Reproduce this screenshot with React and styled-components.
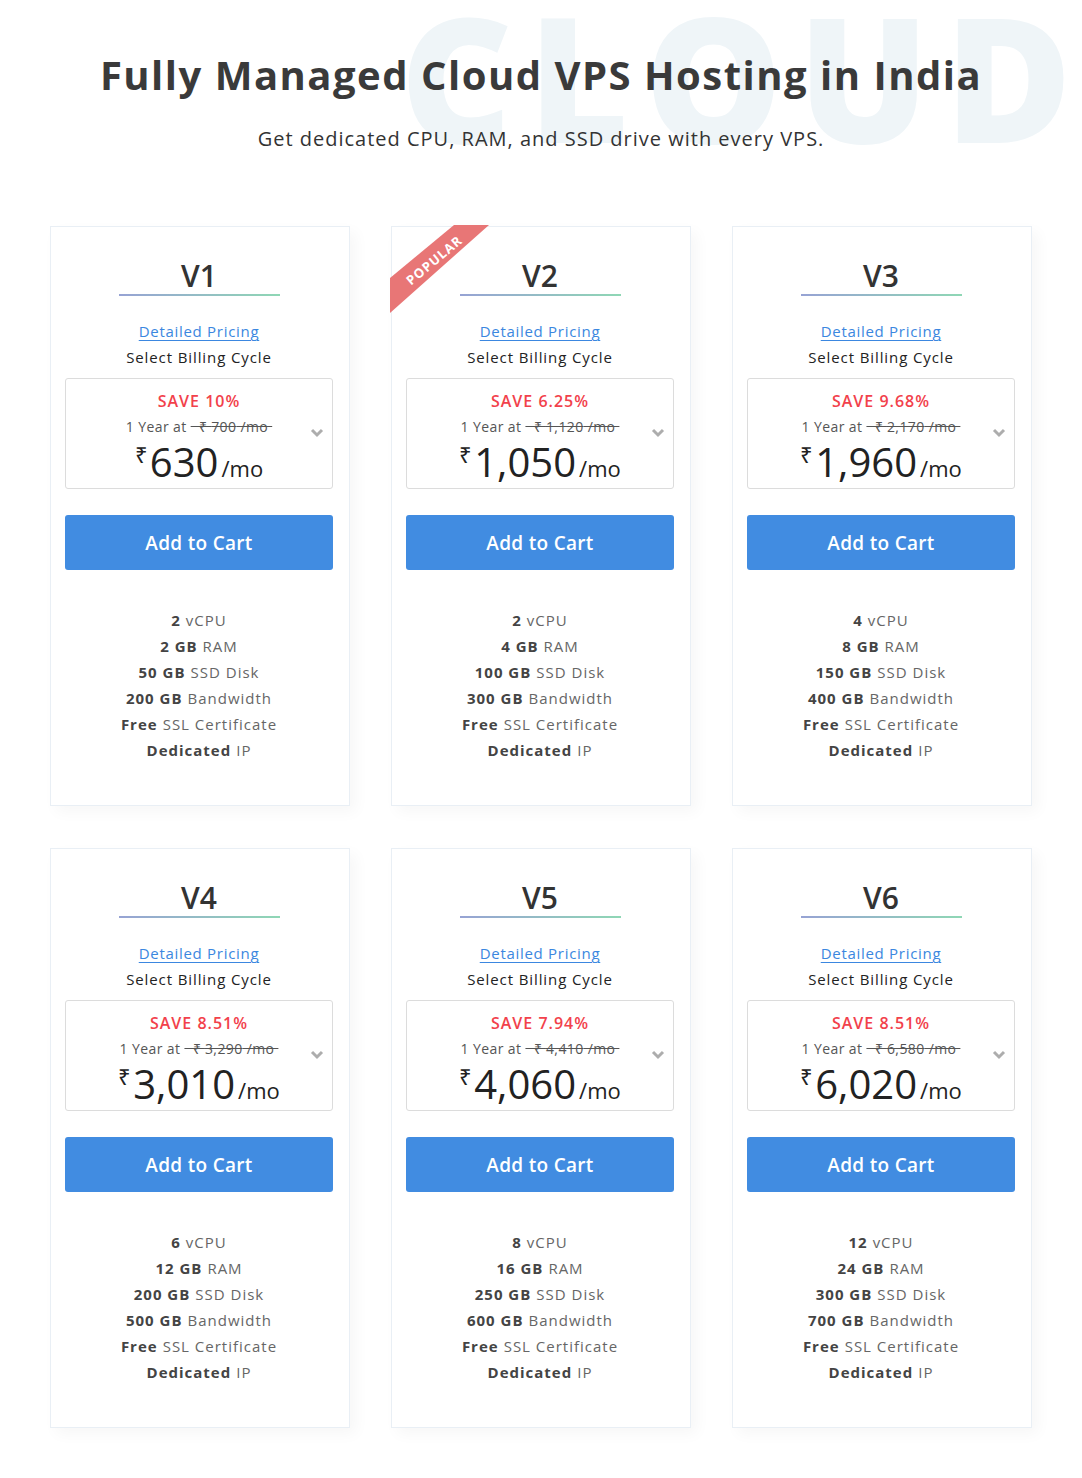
import React from 'react';
import styled, { createGlobalStyle } from 'styled-components';

const GlobalStyle = createGlobalStyle`
  body {
    margin: 0;
    background: #fff;
    font-family: 'Open Sans', 'Liberation Sans', sans-serif;
    color: #333;
  }
`;

const Page = styled.div`
  width: 1082px;
  overflow: hidden;
  padding-bottom: 50px;
`;

const Header = styled.header`
  position: relative;
  text-align: center;
  padding-top: 50px;
`;

const Watermark = styled.div`
  position: absolute;
  left: 400px;
  top: -11px;
  font-size: 174px;
  font-weight: 800;
  letter-spacing: 15px;
  color: #eff5f8;
  line-height: 1;
  white-space: nowrap;
  pointer-events: none;
`;

const Title = styled.h1`
  position: relative;
  margin: 0;
  font-size: 40px;
  line-height: 50px;
  font-weight: 700;
  letter-spacing: 1.5px;
  color: #3a3a3a;
`;

const Subtitle = styled.p`
  position: relative;
  margin: 25px 0 0;
  font-size: 20px;
  line-height: 28px;
  letter-spacing: 1px;
  color: #333;
`;

const Grid = styled.div`
  width: 982px;
  margin: 73px auto 0;
  display: grid;
  grid-template-columns: repeat(3, 300px);
  column-gap: 41px;
  row-gap: 42px;
`;

const Card = styled.div`
  position: relative;
  box-sizing: border-box;
  height: 580px;
  padding: 0 16px 0 14px;
  border: 1px solid #e9eff5;
  box-shadow: 6px 6px 14px rgba(0, 0, 0, 0.035);
  background: #fff;
  text-align: center;
`;

const Ribbon = styled.div`
  position: absolute;
  left: -2px;
  top: -2px;
  width: 100px;
  height: 88px;
  background: #e87676;
  clip-path: polygon(64px 0, 99px 0, 0 88px, 0 53px);
`;

const RibbonText = styled.span`
  position: absolute;
  left: 2px;
  top: 26px;
  width: 84px;
  transform: rotate(-40deg);
  font-size: 13px;
  font-weight: 700;
  letter-spacing: 1px;
  color: #fff;
  text-align: center;
`;

const PlanName = styled.h3`
  margin: 31px 0 0;
  font-size: 30px;
  line-height: 36px;
  font-weight: 600;
  color: #333;
`;

const Underline = styled.div`
  width: 161px;
  height: 2px;
  margin: 0 auto;
  background: linear-gradient(to right, #97a3d4, #8fd7b5);
`;

const DetailLink = styled.a`
  display: block;
  margin-top: 22px;
  font-size: 15px;
  line-height: 26px;
  letter-spacing: 0.7px;
  color: #3b87e0;
  text-decoration: underline;
  text-underline-offset: 3px;
`;

const BillingLabel = styled.div`
  font-size: 15px;
  line-height: 26px;
  letter-spacing: 0.9px;
  color: #222;
`;

const SelectBox = styled.div`
  position: relative;
  box-sizing: border-box;
  height: 111px;
  margin-top: 8px;
  padding-top: 12px;
  border: 1px solid #dcdcdc;
  border-radius: 3px;
`;

const Save = styled.div`
  font-size: 16px;
  line-height: 20px;
  font-weight: 600;
  letter-spacing: 1px;
  color: #f2414b;
`;

const YearLine = styled.div`
  margin-top: 6px;
  font-size: 14px;
  line-height: 20px;
  letter-spacing: 0.4px;
  color: #555;
`;

const Old = styled.span`
  margin-left: 4px;
  text-decoration: line-through;
`;

const Price = styled.div`
  margin-top: -5px;
  font-size: 40px;
  line-height: 44px;
  color: #222;
`;

const Rupee = styled.sup`
  font-size: 22px;
  vertical-align: 14px;
  margin-right: 2px;
`;

const Per = styled.span`
  font-size: 22px;
  margin-left: 3px;
`;

const Chevron = styled.svg`
  position: absolute;
  right: 8px;
  top: 49px;
`;

const CartButton = styled.button`
  display: block;
  width: 100%;
  height: 55px;
  margin-top: 26px;
  border: 0;
  border-radius: 3px;
  background: #418ce1;
  color: #fff;
  font-family: inherit;
  font-size: 19px;
  font-weight: 600;
  letter-spacing: 0.3px;
`;

const Features = styled.ul`
  list-style: none;
  margin: 37px 0 0;
  padding: 0;
`;

const Feature = styled.li`
  font-size: 15px;
  line-height: 26px;
  letter-spacing: 1px;
  color: #666;

  b {
    font-weight: 700;
    color: #444;
    margin-right: 5px;
  }
`;

const plans = [
  { name: 'V1', save: '10%', old: '700', price: '630', cpu: '2', ram: '2 GB', ssd: '50 GB', bw: '200 GB' },
  { name: 'V2', save: '6.25%', old: '1,120', price: '1,050', cpu: '2', ram: '4 GB', ssd: '100 GB', bw: '300 GB', popular: true },
  { name: 'V3', save: '9.68%', old: '2,170', price: '1,960', cpu: '4', ram: '8 GB', ssd: '150 GB', bw: '400 GB' },
  { name: 'V4', save: '8.51%', old: '3,290', price: '3,010', cpu: '6', ram: '12 GB', ssd: '200 GB', bw: '500 GB' },
  { name: 'V5', save: '7.94%', old: '4,410', price: '4,060', cpu: '8', ram: '16 GB', ssd: '250 GB', bw: '600 GB' },
  { name: 'V6', save: '8.51%', old: '6,580', price: '6,020', cpu: '12', ram: '24 GB', ssd: '300 GB', bw: '700 GB' },
];

const App = () => (
  <Page>
    <GlobalStyle />
    <Header>
      <Watermark>CLOUD</Watermark>
      <Title>Fully Managed Cloud VPS Hosting in India</Title>
      <Subtitle>Get dedicated CPU, RAM, and SSD drive with every VPS.</Subtitle>
    </Header>
    <Grid>
      {plans.map((p) => (
        <Card key={p.name}>
          {p.popular && (
            <Ribbon>
              <RibbonText>POPULAR</RibbonText>
            </Ribbon>
          )}
          <PlanName>{p.name}</PlanName>
          <Underline />
          <DetailLink href="#">Detailed Pricing</DetailLink>
          <BillingLabel>Select Billing Cycle</BillingLabel>
          <SelectBox>
            <Save>SAVE {p.save}</Save>
            <YearLine>
              1 Year at<Old>&nbsp;&nbsp;₹ {p.old} /mo&nbsp;</Old>
            </YearLine>
            <Price>
              <Rupee>₹</Rupee>{p.price}<Per>/mo</Per>
            </Price>
            <Chevron width="14" height="10" viewBox="0 0 14 10">
              <polyline points="2,2 7,7 12,2" fill="none" stroke="#adadad" strokeWidth="3" />
            </Chevron>
          </SelectBox>
          <CartButton>Add to Cart</CartButton>
          <Features>
            <Feature><b>{p.cpu}</b>vCPU</Feature>
            <Feature><b>{p.ram}</b>RAM</Feature>
            <Feature><b>{p.ssd}</b>SSD Disk</Feature>
            <Feature><b>{p.bw}</b>Bandwidth</Feature>
            <Feature><b>Free</b>SSL Certificate</Feature>
            <Feature><b>Dedicated</b>IP</Feature>
          </Features>
        </Card>
      ))}
    </Grid>
  </Page>
);

export default App;
